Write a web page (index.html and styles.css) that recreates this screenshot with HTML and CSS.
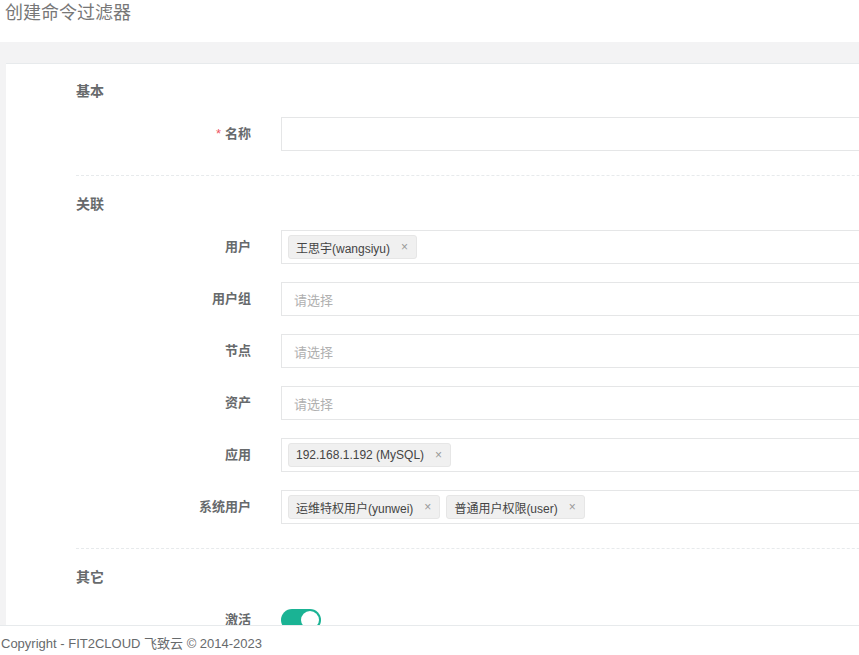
FILE: index.html
```html
<!DOCTYPE html>
<html lang="zh-CN">
<head>
    <meta charset="UTF-8">
    <meta name="viewport" content="width=device-width, initial-scale=1.0">
    <title>创建命令过滤器</title>
    <link rel="stylesheet" href="styles.css">
</head>
<body>
    <div class="page-header">
        <h2>创建命令过滤器</h2>
    </div>
    <div class="wrapper">
        <div class="card">
            <form class="form">
                <h3>基本</h3>
                <div class="row">
                    <label><span class="required">*</span>名称</label>
                    <div class="field"></div>
                </div>
                <div class="divider"></div>

                <h3>关联</h3>
                <div class="row">
                    <label>用户</label>
                    <div class="field">
                        <span class="tag">王思宇(wangsiyu)<i>×</i></span>
                    </div>
                </div>
                <div class="row">
                    <label>用户组</label>
                    <div class="field"><span class="placeholder">请选择</span></div>
                </div>
                <div class="row">
                    <label>节点</label>
                    <div class="field"><span class="placeholder">请选择</span></div>
                </div>
                <div class="row">
                    <label>资产</label>
                    <div class="field"><span class="placeholder">请选择</span></div>
                </div>
                <div class="row">
                    <label>应用</label>
                    <div class="field">
                        <span class="tag">192.168.1.192 (MySQL)<i>×</i></span>
                    </div>
                </div>
                <div class="row">
                    <label>系统用户</label>
                    <div class="field">
                        <span class="tag">运维特权用户(yunwei)<i>×</i></span>
                        <span class="tag">普通用户权限(user)<i>×</i></span>
                    </div>
                </div>
                <div class="divider"></div>

                <h3>其它</h3>
                <div class="row">
                    <label>激活</label>
                    <div class="switch-cell">
                        <span class="switch"></span>
                    </div>
                </div>
            </form>
        </div>
    </div>
    <footer>
        <p>Copyright - FIT2CLOUD 飞致云 © 2014-2023</p>
    </footer>
</body>
</html>
```

FILE: styles.css
```css
* {
    margin: 0;
    padding: 0;
    box-sizing: border-box;
}

html, body {
    overflow: hidden;
}

body {
    font-family: "Liberation Sans", Arial, "Noto Sans CJK SC", sans-serif;
    color: #676a6c;
    background-color: #f3f3f4;
    width: 1100px;
    height: 655px;
}

.page-header {
    background-color: white;
    height: 42px;
    padding: 2px 0 0 5px;
}

.page-header h2 {
    font-size: 18px;
    font-weight: normal;
    line-height: 22px;
    color: #777;
}

.wrapper {
    padding: 21px 0 0 6px;
}

.card {
    background-color: white;
    border-top: 1px solid #e7eaec;
    height: 600px;
}

.form {
    padding: 17px 0 0 70px;
}

.form h3 {
    font-size: 14px;
    font-weight: bold;
    line-height: 20px;
    color: #676a6c;
    margin-bottom: 16px;
}

/* row margin (18px) collapses into this one */
.divider {
    border-top: 1px dashed #e7eaec;
    margin: 24px 0 18px;
}

.row {
    display: flex;
    margin-bottom: 18px;
}

.row label {
    width: 205px;
    padding-right: 30px;
    text-align: right;
    font-size: 13px;
    font-weight: bold;
    line-height: 34px;
    color: #676a6c;
}

.required {
    color: #ed5565;
    font-weight: normal;
    margin-right: 4px;
}

.field {
    flex: 1;
    height: 34px;
    border: 1px solid #e5e6e7;
    padding: 4px 6px;
    display: flex;
    align-items: center;
    gap: 6px;
}

.placeholder {
    font-size: 13px;
    color: #b0b0b0;
    padding-left: 6px;
}

.tag {
    display: inline-flex;
    align-items: center;
    height: 24px;
    padding: 0 8px 0 7px;
    background-color: #f0f0f0;
    border: 1px solid #e6e6e6;
    border-radius: 3px;
    font-size: 12px;
    color: #444;
}

.tag i {
    font-style: normal;
    color: #999;
    margin-left: 11px;
}

.switch-cell {
    display: flex;
    align-items: center;
    height: 34px;
}

.switch {
    position: relative;
    display: inline-block;
    width: 40px;
    height: 22px;
    border-radius: 11px;
    background-color: #1ab394;
}

.switch:after {
    content: "";
    position: absolute;
    top: 2px;
    right: 2px;
    width: 18px;
    height: 18px;
    border-radius: 50%;
    background-color: white;
}

footer {
    position: fixed;
    left: 0;
    bottom: 0;
    width: 100%;
    height: 30px;
    background-color: white;
    border-top: 1px solid #e7eaec;
    font-size: 13px;
    line-height: 36px;
    padding-left: 1px;
    color: #676a6c;
}
```
